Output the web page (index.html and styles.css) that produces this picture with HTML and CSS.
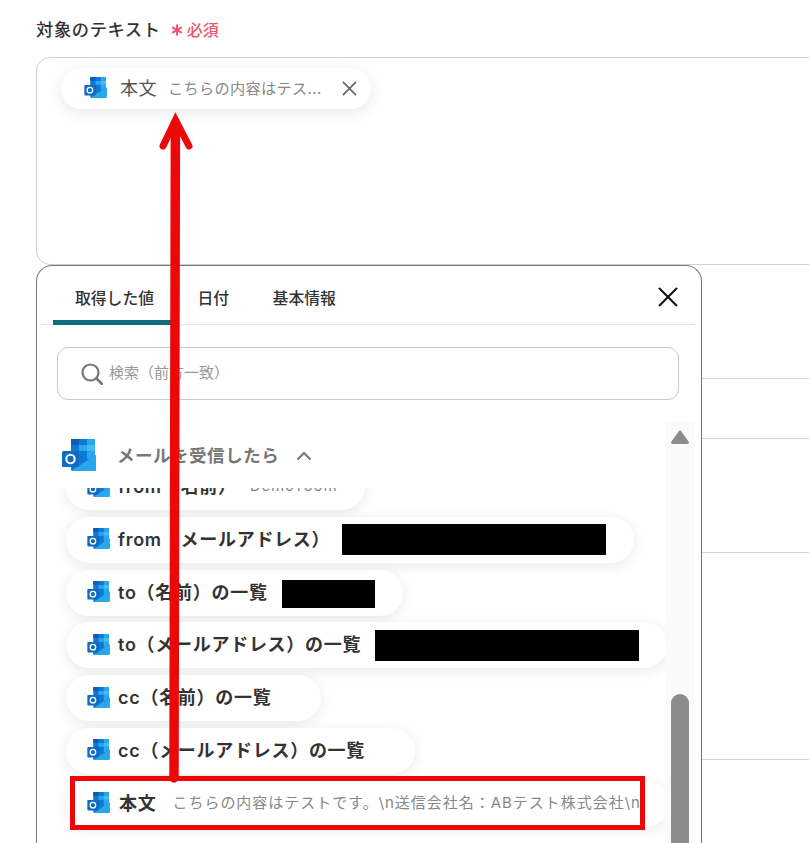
FILE: index.html
```html
<!DOCTYPE html>
<html lang="ja">

<head>
    <title>対象のテキスト</title>
    <meta name="viewport" content="width=device-width, initial-scale=1">
    <link rel="stylesheet" href="styles.css">
</head>

<body>
    <svg class="icon-defs" width="0" height="0">
        <symbol id="outlook" viewBox="0 0 34 32">
            <rect x="9" y="0" width="24" height="27" rx="1.5" fill="#0f78d4"/>
            <rect x="9" y="0" width="8" height="6" fill="#0a5fb4"/>
            <rect x="25" y="0" width="8" height="6" fill="#28a8ea"/>
            <rect x="17" y="6" width="8" height="6" fill="#28a8ea"/>
            <rect x="25" y="6" width="8" height="6" fill="#46bcf2"/>
            <rect x="9" y="12" width="8" height="14" fill="#0a5fb4"/>
            <rect x="25" y="12" width="8" height="8" fill="#28a8ea"/>
            <path d="M9 18 L21 25 L34 16 V30 a2 2 0 0 1 -2 2 H11 a2 2 0 0 1 -2 -2 Z" fill="#0f78d4"/>
            <path d="M9 32 L26 21 L34 16 V30 a2 2 0 0 1 -2 2 Z" fill="#28a8ea"/>
            <rect x="0" y="12" width="17" height="16" rx="1.5" fill="#0f6cc4"/>
            <circle cx="8.5" cy="20" r="4.2" fill="none" stroke="#fff" stroke-width="2"/>
        </symbol>
    </svg>

    <div class="page">
        <div class="field-label">
            <span class="field-name">対象のテキスト</span>
            <span class="required">
                <svg class="asterisk" viewBox="0 0 12 12">
                    <path d="M6 0.5 V11.5 M1.2 3.2 L10.8 8.8 M10.8 3.2 L1.2 8.8" stroke="#f2566b" stroke-width="2" fill="none"/>
                </svg>
                必須
            </span>
        </div>
        <div class="text-box">
            <div class="chip">
                <svg class="icon-small"><use href="#outlook"/></svg>
                <span class="chip-name">本文</span>
                <span class="chip-value">こちらの内容はテス...</span>
                <svg class="chip-close" viewBox="0 0 16 16">
                    <path d="M1 1 L15 15 M15 1 L1 15" stroke="#666" stroke-width="1.8" fill="none"/>
                </svg>
            </div>
        </div>
        <div class="bg-row row-a"></div>
        <div class="bg-row row-b"></div>
        <div class="bg-row row-c"></div>
        <div class="bg-row row-d"></div>
    </div>

    <div class="panel">
        <div class="tabs">
            <div class="tab active">取得した値</div>
            <div class="tab">日付</div>
            <div class="tab">基本情報</div>
            <svg class="panel-close" viewBox="0 0 20 20">
                <path d="M1 1 L19 19 M19 1 L1 19" stroke="#111" stroke-width="2.1" fill="none"/>
            </svg>
        </div>

        <div class="search">
            <svg class="search-icon" viewBox="0 0 22 22">
                <circle cx="9.5" cy="9.5" r="8" fill="none" stroke="#777" stroke-width="2.2"/>
                <path d="M15.5 15.5 L21 21" stroke="#777" stroke-width="2.6" stroke-linecap="round"/>
            </svg>
            <span class="search-text">検索（前方一致）</span>
        </div>

        <div class="results">
            <div class="results-main">
                <div class="group-head">
                    <svg class="icon-large"><use href="#outlook"/></svg>
                    <span class="group-name">メールを受信したら</span>
                    <svg class="chevron" viewBox="0 0 16 10">
                        <path d="M1.5 8.5 L8 2 L14.5 8.5" stroke="#777" stroke-width="2.2" fill="none"/>
                    </svg>
                </div>
                <div class="list-clip">
                    <div class="list">
                        <div class="item">
                            <svg class="icon-small"><use href="#outlook"/></svg>
                            <span class="item-name">from（名前）</span>
                            <span class="item-value">DemoYoom</span>
                        </div>
                        <div class="item">
                            <svg class="icon-small"><use href="#outlook"/></svg>
                            <span class="item-name">from（メールアドレス）</span>
                            <span class="redacted near"></span>
                        </div>
                        <div class="item">
                            <svg class="icon-small"><use href="#outlook"/></svg>
                            <span class="item-name">to（名前）の一覧</span>
                            <span class="redacted short"></span>
                        </div>
                        <div class="item">
                            <svg class="icon-small"><use href="#outlook"/></svg>
                            <span class="item-name">to（メールアドレス）の一覧</span>
                            <span class="redacted"></span>
                        </div>
                        <div class="item">
                            <svg class="icon-small"><use href="#outlook"/></svg>
                            <span class="item-name">cc（名前）の一覧</span>
                            <span class="item-value empty"></span>
                        </div>
                        <div class="item">
                            <svg class="icon-small"><use href="#outlook"/></svg>
                            <span class="item-name">cc（メールアドレス）の一覧</span>
                            <span class="item-value empty"></span>
                        </div>
                        <div class="item">
                            <svg class="icon-small"><use href="#outlook"/></svg>
                            <span class="item-name body">本文</span>
                            <span class="item-value long">こちらの内容はテストです。\n送信会社名：ABテスト株式会社\n</span>
                        </div>
                    </div>
                </div>
            </div>
            <div class="scrollbar">
                <svg class="scroll-up" viewBox="0 0 18 14">
                    <path d="M9 2 L16.5 12.5 H1.5 Z" fill="#8c8c8c" stroke="#8c8c8c" stroke-width="3" stroke-linejoin="round"/>
                </svg>
                <div class="scroll-thumb"></div>
            </div>
        </div>
    </div>

    <div class="highlight"></div>

    <svg class="arrow" width="809" height="843" viewBox="0 0 809 843">
        <path d="M174 778 L175.4 124" stroke="#ec0808" stroke-width="9.5" stroke-linecap="round" fill="none"/>
        <path d="M163 146 L175.5 120 L189 146" stroke="#ec0808" stroke-width="7" stroke-linecap="round" fill="none"/>
        <path d="M175.5 116 L169 134 H182 Z" fill="#ec0808"/>
    </svg>
</body>

</html>
```

FILE: styles.css
```css
html, body {
    margin: 0;
    padding: 0;
    height: 843px;
    overflow: hidden;
    background-color: #ffffff;
}

body {
    position: relative;
    font-family: Inter, "Noto Sans CJK JP", sans-serif;
    color: #333333;
}

.icon-defs {
    position: absolute;
}

.page {
    padding-left: 36px;
    margin-right: -30px;
}

.field-label {
    display: flex;
    align-items: center;
    height: 57px;
    padding-bottom: 1px;
    box-sizing: border-box;
}

.field-name {
    font-size: 17.2px;
    font-weight: 500;
    letter-spacing: 0.04em;
    color: #333333;
}

.required {
    display: flex;
    align-items: center;
    margin-left: 10px;
    padding-top: 1px;
    font-size: 16px;
    font-weight: 500;
    color: #f2566b;
}

.asterisk {
    width: 12px;
    height: 12px;
    margin: 2px 4px 0 0;
}

.text-box {
    height: 208px;
    box-sizing: border-box;
    border: 1px solid #ccd0d8;
    border-radius: 14px;
    padding: 10px 0 0 24px;
}

.chip {
    display: inline-flex;
    align-items: center;
    width: 310px;
    height: 41px;
    box-sizing: border-box;
    padding-left: 23px;
    border-radius: 21px;
    background-color: #ffffff;
    box-shadow: 0 4px 16px rgba(0, 0, 0, 0.09);
}

.icon-small {
    flex: none;
    width: 23px;
    height: 21px;
    margin-bottom: 2px;
}

.chip-name {
    margin-left: 13px;
    padding-bottom: 4px;
    font-size: 18px;
    letter-spacing: 0.03em;
    color: #555555;
}

.chip-value {
    margin-left: 11px;
    padding-bottom: 3px;
    font-size: 15.2px;
    letter-spacing: 0.02em;
    color: #888888;
    white-space: nowrap;
}

.chip-close {
    flex: none;
    width: 15px;
    height: 15px;
    margin-left: 20px;
    margin-bottom: 1px;
}

.bg-row {
    border-bottom: 1px solid #d0d3d8;
}

.row-a {
    height: 113px;
}

.row-b {
    height: 59px;
}

.row-c {
    height: 113px;
}

.row-d {
    height: 206px;
}

.panel {
    position: absolute;
    top: 265px;
    left: 36px;
    width: 666px;
    height: 578px;
    box-sizing: border-box;
    padding: 0 6px 0 4px;
    border: 1px solid #777777;
    border-bottom: none;
    border-radius: 16px 16px 0 0;
    background-color: #ffffff;
    overflow: hidden;
}

.tabs {
    display: flex;
    align-items: center;
    height: 59px;
    box-sizing: border-box;
    padding: 0 17px 0 12px;
    border-bottom: 1px solid #e2e2e2;
}

.tab {
    display: flex;
    align-items: center;
    height: 59px;
    box-sizing: border-box;
    padding: 4px 21.5px 0 22px;
    font-size: 15.8px;
    font-weight: 500;
    color: #333333;
}

.tab.active {
    border-bottom: 5px solid #0f6b80;
    padding-top: 9px;
    border-radius: 5px 5px 0 0;
}

.panel-close {
    width: 20px;
    height: 20px;
    margin-left: auto;
    margin-top: 3px;
}

.search {
    display: flex;
    align-items: center;
    height: 53px;
    box-sizing: border-box;
    margin: 22px 16px 0;
    padding-left: 23px;
    border: 1px solid #c8c8c8;
    border-radius: 11px;
    font-size: 15px;
    color: #999999;
}

.search-icon {
    width: 22px;
    height: 22px;
    margin-right: 6px;
}

.search-text {
    padding-bottom: 4px;
}

.results {
    display: flex;
    margin-top: 21px;
    height: 422px;
}

.results-main {
    width: 624px;
    overflow: hidden;
}

.group-head {
    display: flex;
    align-items: center;
    height: 67px;
    padding-left: 21px;
}

.icon-large {
    flex: none;
    width: 34px;
    height: 32px;
}

.group-name {
    margin-left: 21px;
    font-size: 17.5px;
    font-weight: 700;
    letter-spacing: 0.03em;
    color: #777777;
}

.chevron {
    width: 16px;
    height: 10px;
    margin-left: 17px;
    margin-top: 3px;
}

.list-clip {
    height: 355px;
    overflow: hidden;
}

.list {
    display: flex;
    flex-direction: column;
    align-items: flex-start;
    gap: 6.75px;
    margin-top: -24px;
    padding-left: 25px;
}

.item {
    display: flex;
    flex: none;
    align-items: center;
    height: 46px;
    box-sizing: border-box;
    padding: 0 28px 0 21px;
    border-radius: 23px;
    background-color: #ffffff;
    box-shadow: 0 3px 14px rgba(0, 0, 0, 0.09);
    white-space: nowrap;
}

.item-name {
    margin-left: 8px;
    padding-bottom: 4px;
    font-size: 18px;
    font-weight: 600;
    letter-spacing: 0.04em;
    color: #333333;
}

.item-name.body {
    margin-left: 9px;
}

.item-value {
    margin-left: 13px;
    padding-bottom: 4px;
    font-size: 15px;
    letter-spacing: 0.06em;
    color: #888888;
}

.item-value.empty {
    margin-left: 22px;
}

.item-value.long {
    margin-left: 16px;
    letter-spacing: 0.065em;
}

.redacted {
    display: block;
    width: 264px;
    height: 31px;
    margin-left: 14px;
    background-color: #000000;
}

.redacted.near {
    margin-left: 12px;
}

.redacted.short {
    width: 93px;
    height: 28px;
    margin-top: 2px;
}

.scrollbar {
    display: flex;
    flex-direction: column;
    align-items: center;
    width: 30px;
    background-color: #fafafa;
}

.scroll-up {
    flex: none;
    width: 18px;
    height: 14px;
    margin-top: 9px;
}

.scroll-thumb {
    flex: none;
    width: 18px;
    height: 300px;
    margin-top: 250px;
    border-radius: 9px;
    background-color: #8c8c8c;
}

.highlight {
    position: absolute;
    top: 776px;
    left: 70px;
    width: 575px;
    height: 54px;
    box-sizing: border-box;
    border: 5px solid #ec0808;
}

.arrow {
    position: absolute;
    top: 0;
    left: 0;
}
```
